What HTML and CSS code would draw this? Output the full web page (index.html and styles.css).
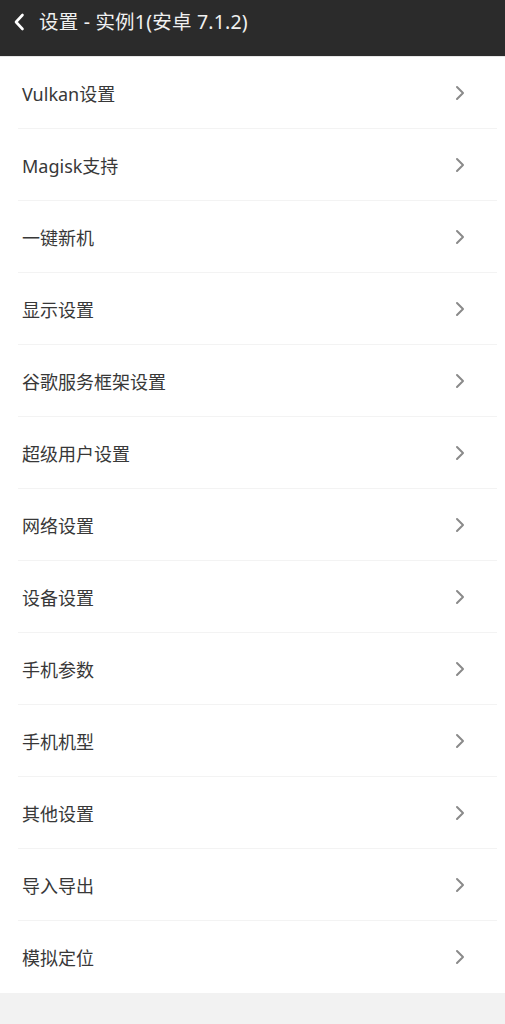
FILE: index.html
```html
<!DOCTYPE html>
<html lang="zh-CN">
<head>
<meta charset="utf-8">
<link rel="stylesheet" href="styles.css">
</head>
<body>
<header class="topbar">
  <svg class="back" width="12" height="18" viewBox="0 0 12 18"><path d="M9.5 2 L3 9 L9.5 16" fill="none" stroke="#fff" stroke-width="2.6" stroke-linecap="round" stroke-linejoin="round"/></svg>
  <span class="title">设置 - 实例1(安卓 7.1.2)</span>
</header>
<ul class="list">
  <li class="row"><span>Vulkan设置</span><svg class="chev" viewBox="0 0 10 16"><path d="M2 2 L8 8 L2 14"/></svg></li>
  <li class="row"><span>Magisk支持</span><svg class="chev" viewBox="0 0 10 16"><path d="M2 2 L8 8 L2 14"/></svg></li>
  <li class="row"><span>一键新机</span><svg class="chev" viewBox="0 0 10 16"><path d="M2 2 L8 8 L2 14"/></svg></li>
  <li class="row"><span>显示设置</span><svg class="chev" viewBox="0 0 10 16"><path d="M2 2 L8 8 L2 14"/></svg></li>
  <li class="row"><span>谷歌服务框架设置</span><svg class="chev" viewBox="0 0 10 16"><path d="M2 2 L8 8 L2 14"/></svg></li>
  <li class="row"><span>超级用户设置</span><svg class="chev" viewBox="0 0 10 16"><path d="M2 2 L8 8 L2 14"/></svg></li>
  <li class="row"><span>网络设置</span><svg class="chev" viewBox="0 0 10 16"><path d="M2 2 L8 8 L2 14"/></svg></li>
  <li class="row"><span>设备设置</span><svg class="chev" viewBox="0 0 10 16"><path d="M2 2 L8 8 L2 14"/></svg></li>
  <li class="row"><span>手机参数</span><svg class="chev" viewBox="0 0 10 16"><path d="M2 2 L8 8 L2 14"/></svg></li>
  <li class="row"><span>手机机型</span><svg class="chev" viewBox="0 0 10 16"><path d="M2 2 L8 8 L2 14"/></svg></li>
  <li class="row"><span>其他设置</span><svg class="chev" viewBox="0 0 10 16"><path d="M2 2 L8 8 L2 14"/></svg></li>
  <li class="row"><span>导入导出</span><svg class="chev" viewBox="0 0 10 16"><path d="M2 2 L8 8 L2 14"/></svg></li>
  <li class="row"><span>模拟定位</span><svg class="chev" viewBox="0 0 10 16"><path d="M2 2 L8 8 L2 14"/></svg></li>
</ul>
</body>
</html>
```
FILE: styles.css
```css
html, body {
  margin: 0;
  padding: 0;
  background: #f2f2f2;
  font-family: "Noto Sans", "Noto Sans CJK SC", sans-serif;
}
.topbar {
  height: 57px;
  background: #2b2b2b;
  display: flex;
  align-items: center;
  padding: 0 0 13px 13px;
  box-sizing: border-box;
  border-bottom: 1px solid #e6e6e6;
}
.back {
  display: block;
  margin-right: 14px;
}
.title {
  color: #f0f0f0;
  font-size: 19.5px;
  letter-spacing: 0.2px;
  position: relative;
  top: -1px;
}
.list {
  list-style: none;
  margin: 0;
  padding: 0;
  background: #fff;
}
.row {
  position: relative;
  height: 72px;
  display: flex;
  align-items: center;
  justify-content: space-between;
  padding: 0 40px 0 22px;
  color: #383838;
  font-size: 18px;
}
.row::after {
  content: "";
  position: absolute;
  left: 18px;
  right: 8px;
  bottom: 0;
  height: 1px;
  background: #f3f3f3;
}
.row:last-child::after {
  display: none;
}
.chev {
  width: 10px;
  height: 16px;
  fill: none;
  stroke: #8a8a8a;
  stroke-width: 2;
  stroke-linecap: round;
  stroke-linejoin: round;
}
```
